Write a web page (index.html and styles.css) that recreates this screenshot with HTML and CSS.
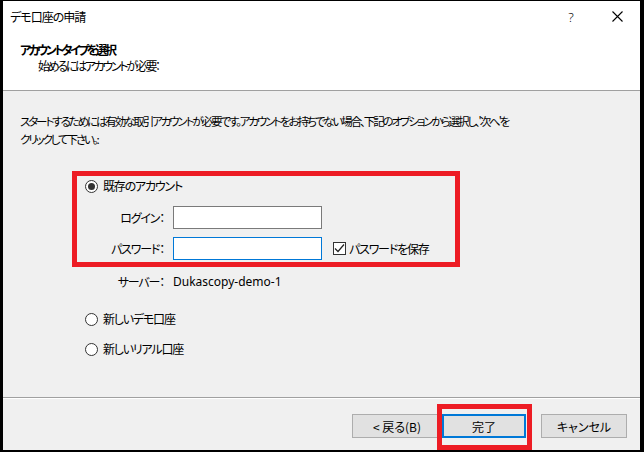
FILE: index.html
```html
<!DOCTYPE html>
<html lang="ja">
<head>
    <meta charset="UTF-8">
    <title>デモ口座の申請</title>
    <link rel="stylesheet" href="styles.css">
</head>
<body>
    <div class="dialog">
        <div class="titlebar">
            <span class="title">デモ口座の申請</span>
            <span class="caption-btn help">?</span>
            <span class="caption-btn close">
                <svg width="11" height="11" viewBox="0 0 11 11"><path d="M0.5 0.5 L10.5 10.5 M10.5 0.5 L0.5 10.5" stroke="#000" stroke-width="1.1" fill="none"/></svg>
            </span>
        </div>

        <div class="header">
            <div class="heading">アカウントタイプを選択</div>
            <div class="subheading">始めるにはアカウントが必要：</div>
        </div>

        <div class="content">
            <p class="intro">スタートするためには有効な取引アカウントが必要です。アカウントをお持ちでない場合、下記のオプションから選択し、'次へ'を<br>クリックして下さい。:</p>

            <div class="highlight">
                <div class="radio-row"><span class="radio checked"></span>既存のアカウント</div>
                <div class="field">
                    <span class="field-label">ログイン：</span>
                    <span class="input"></span>
                </div>
                <div class="field field-pass">
                    <span class="field-label">パスワード：</span>
                    <span class="input focused"></span>
                    <span class="checkbox">
                        <svg width="11" height="11" viewBox="0 0 11 11"><path d="M1 5.5 L4 8.5 L10 1.5" stroke="#222" stroke-width="1.2" fill="none"/></svg>
                    </span>
                    <span>パスワードを保存</span>
                </div>
            </div>

            <div class="field server">
                <span class="field-label">サーバー：</span>
                <span class="server-name">Dukascopy-demo-1</span>
            </div>

            <div class="radio-row option demo"><span class="radio"></span>新しいデモ口座</div>
            <div class="radio-row option real"><span class="radio"></span>新しいリアル口座</div>
        </div>

        <div class="footer">
            <button class="btn back">&lt; 戻る(B)</button>
            <span class="finish-wrap">
                <button class="btn finish">完了</button>
                <span class="mark"></span>
            </span>
            <button class="btn cancel">キャンセル</button>
        </div>
    </div>
</body>
</html>
```

FILE: styles.css
```css
/* page */
body {
    margin: 0;
    padding: 1px 4px 2px 3px;
    background-color: #000;
    font-family: "Noto Sans CJK JP", "Noto Sans", sans-serif;
    font-size: 12px;
    font-feature-settings: "palt";
    letter-spacing: -1.2px;
    color: #000;
}

.dialog {
    width: 637px;
    height: 449px;
    background-color: #f0f0f0;
    display: flex;
    flex-direction: column;
}

/* title bar */
.titlebar {
    height: 31px;
    background-color: #fff;
    display: flex;
    align-items: center;
}

.title {
    flex: 1;
    padding-left: 7px;
    line-height: 16px;
    letter-spacing: -1px;
}

.caption-btn {
    width: 46px;
    height: 31px;
    display: flex;
    align-items: center;
    justify-content: center;
}

.help {
    font-family: "Noto Sans", sans-serif;
    font-size: 13px;
    font-weight: 300;
    letter-spacing: 0;
}

/* header */
.header {
    height: 59px;
    box-sizing: border-box;
    background-color: #fff;
    border-bottom: 1px solid #a0a0a0;
    padding: 10px 0 0 17px;
    line-height: 16px;
}

.heading {
    font-weight: bold;
    letter-spacing: -2.6px;
}

.subheading {
    padding-left: 18px;
    letter-spacing: -2.3px;
}

/* body */
.content {
    flex: 1;
    padding: 21px 0 0 17px;
}

.intro {
    margin: 0;
    line-height: 18px;
    font-size: 11.5px;
    letter-spacing: -2.1px;
    white-space: nowrap;
}

.highlight {
    margin: 23px 0 0 52px;
    width: 388px;
    height: 96px;
    box-sizing: border-box;
    border: 5px solid #ed1c24;
    padding: 1px 0 0 8px;
}

.radio-row {
    display: flex;
    align-items: center;
    line-height: 18px;
}

.radio {
    width: 11px;
    height: 11px;
    border: 1px solid #333;
    border-radius: 50%;
    background-color: #fff;
    margin-right: 5px;
    display: flex;
    align-items: center;
    justify-content: center;
}

.radio.checked::after {
    content: "";
    width: 7px;
    height: 7px;
    border-radius: 50%;
    background-color: #333;
}

.field {
    display: flex;
    align-items: center;
    margin-top: 11px;
    margin-left: -8px;
}

.field-pass {
    margin-top: 8px;
}

.field-label {
    width: 87px;
    text-align: right;
    margin-right: 9px;
}

.input {
    width: 149px;
    height: 23px;
    box-sizing: border-box;
    background-color: #fff;
    border: 1px solid #7a7a7a;
}

.input.focused {
    border-color: #0078d7;
}

.checkbox {
    width: 13px;
    height: 13px;
    box-sizing: border-box;
    border: 1px solid #333;
    background-color: #fff;
    margin: 0 3px 0 11px;
    display: flex;
    align-items: center;
    justify-content: center;
}

.server {
    margin: 6px 0 0 57px;
    line-height: 18px;
}

.server-name {
    font-family: "Noto Sans", sans-serif;
    letter-spacing: 0;
}

.option {
    margin-left: 65px;
}

.demo {
    margin-top: 19px;
}

.real {
    margin-top: 12px;
}

/* footer */
.footer {
    height: 53px;
    box-sizing: border-box;
    border-top: 1px solid #a0a0a0;
    box-shadow: inset 0 1px 0 #fff;
    padding: 16px 13px 0 0;
    display: flex;
    align-items: flex-start;
    justify-content: flex-end;
}

.btn {
    height: 24px;
    box-sizing: border-box;
    background-color: #e1e1e1;
    border: 1px solid #adadad;
    font-family: inherit;
    font-size: 12px;
    font-feature-settings: "palt";
    letter-spacing: 0;
    padding: 0;
    color: #000;
}

.back {
    width: 90px;
}

.finish-wrap {
    position: relative;
    display: flex;
}

.finish {
    width: 84px;
    border: 2px solid #0078d7;
}

.mark {
    position: absolute;
    left: -5px;
    top: -10px;
    width: 95px;
    height: 46px;
    box-sizing: border-box;
    border: 5px solid #ed1c24;
}

.cancel {
    width: 86px;
    margin-left: 15px;
}
```
